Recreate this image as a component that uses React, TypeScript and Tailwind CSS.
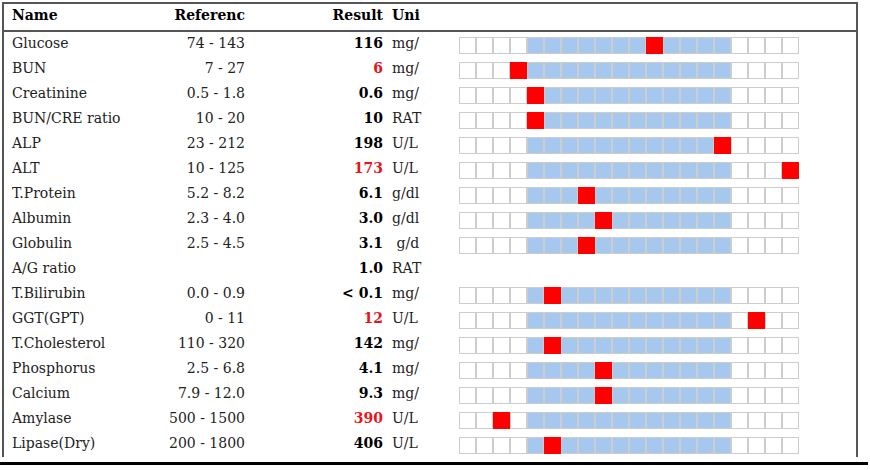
type Row = {
  name: string;
  range: string;
  result: string;
  high?: boolean;
  unit: string;
  mark: number | null;
};

const ROWS: Row[] = [
  { name: 'Glucose', range: '74 - 143', result: '116', unit: 'mg/', mark: 11 },
  { name: 'BUN', range: '7 - 27', result: '6', high: true, unit: 'mg/', mark: 3 },
  { name: 'Creatinine', range: '0.5 - 1.8', result: '0.6', unit: 'mg/', mark: 4 },
  { name: 'BUN/CRE ratio', range: '10 - 20', result: '10', unit: 'RAT', mark: 4 },
  { name: 'ALP', range: '23 - 212', result: '198', unit: 'U/L', mark: 15 },
  { name: 'ALT', range: '10 - 125', result: '173', high: true, unit: 'U/L', mark: 19 },
  { name: 'T.Protein', range: '5.2 - 8.2', result: '6.1', unit: 'g/dl', mark: 7 },
  { name: 'Albumin', range: '2.3 - 4.0', result: '3.0', unit: 'g/dl', mark: 8 },
  { name: 'Globulin', range: '2.5 - 4.5', result: '3.1', unit: ' g/d', mark: 7 },
  { name: 'A/G ratio', range: '', result: '1.0', unit: 'RAT', mark: null },
  { name: 'T.Bilirubin', range: '0.0 - 0.9', result: '< 0.1', unit: 'mg/', mark: 5 },
  { name: 'GGT(GPT)', range: '0 - 11', result: '12', high: true, unit: 'U/L', mark: 17 },
  { name: 'T.Cholesterol', range: '110 - 320', result: '142', unit: 'mg/', mark: 5 },
  { name: 'Phosphorus', range: '2.5 - 6.8', result: '4.1', unit: 'mg/', mark: 8 },
  { name: 'Calcium', range: '7.9 - 12.0', result: '9.3', unit: 'mg/', mark: 8 },
  { name: 'Amylase', range: '500 - 1500', result: '390', high: true, unit: 'U/L', mark: 2 },
  { name: 'Lipase(Dry)', range: '200 - 1800', result: '406', unit: 'U/L', mark: 5 },
];

const CELLS = Array.from({ length: 20 }, (_, i) => i);

function Bar({ mark }: { mark: number }) {
  return (
    <div className="flex">
      {CELLS.map((i) => {
        const inRange = i >= 4 && i < 16;
        let cls = 'w-[17px] h-[17px] border border-[#cdcdcd] ';
        if (i === mark) cls = 'w-[17px] h-[17px] border border-[#f00] bg-[#f00]';
        else cls += inRange ? 'bg-[#a6c8ef]' : 'bg-white';
        return <div key={i} className={cls} />;
      })}
    </div>
  );
}

export default function App() {
  return (
    <div
      className="w-[870px] h-[470px] bg-white text-[14px] text-[#222] overflow-hidden"
      style={{ fontFamily: '"DejaVu Serif", serif' }}
    >
      <div className="ml-[2px] mt-[2px] w-[856px] border-l-2 border-t-2 border-r-2 border-[#555]">
        <div className="h-[28px] flex border-b-2 border-[#555] pl-[8px] font-bold text-black leading-[22px]">
          <div className="w-[130px]">Name</div>
          <div className="w-[103px] text-right">Referenc</div>
          <div className="w-[138px] text-right">Result</div>
          <div className="w-[67px] pl-[9px]">Uni</div>
        </div>
        {ROWS.map((r) => (
          <div key={r.name} className="h-[25px] flex pl-[8px] leading-[22px] whitespace-pre">
            <div className="w-[130px]">{r.name}</div>
            <div className="w-[103px] text-right">{r.range}</div>
            <div
              className={
                r.high
                  ? 'w-[138px] text-right font-bold text-[#e8141a]'
                  : 'w-[138px] text-right font-bold text-black'
              }
            >
              {r.result}
            </div>
            <div className="w-[76px] pl-[9px]">{r.unit}</div>
            <div className="pt-[5px]">{r.mark !== null && <Bar mark={r.mark} />}</div>
          </div>
        ))}
      </div>
      <div className="mt-[5px] h-[3px] w-[868px] bg-black" />
    </div>
  );
}
